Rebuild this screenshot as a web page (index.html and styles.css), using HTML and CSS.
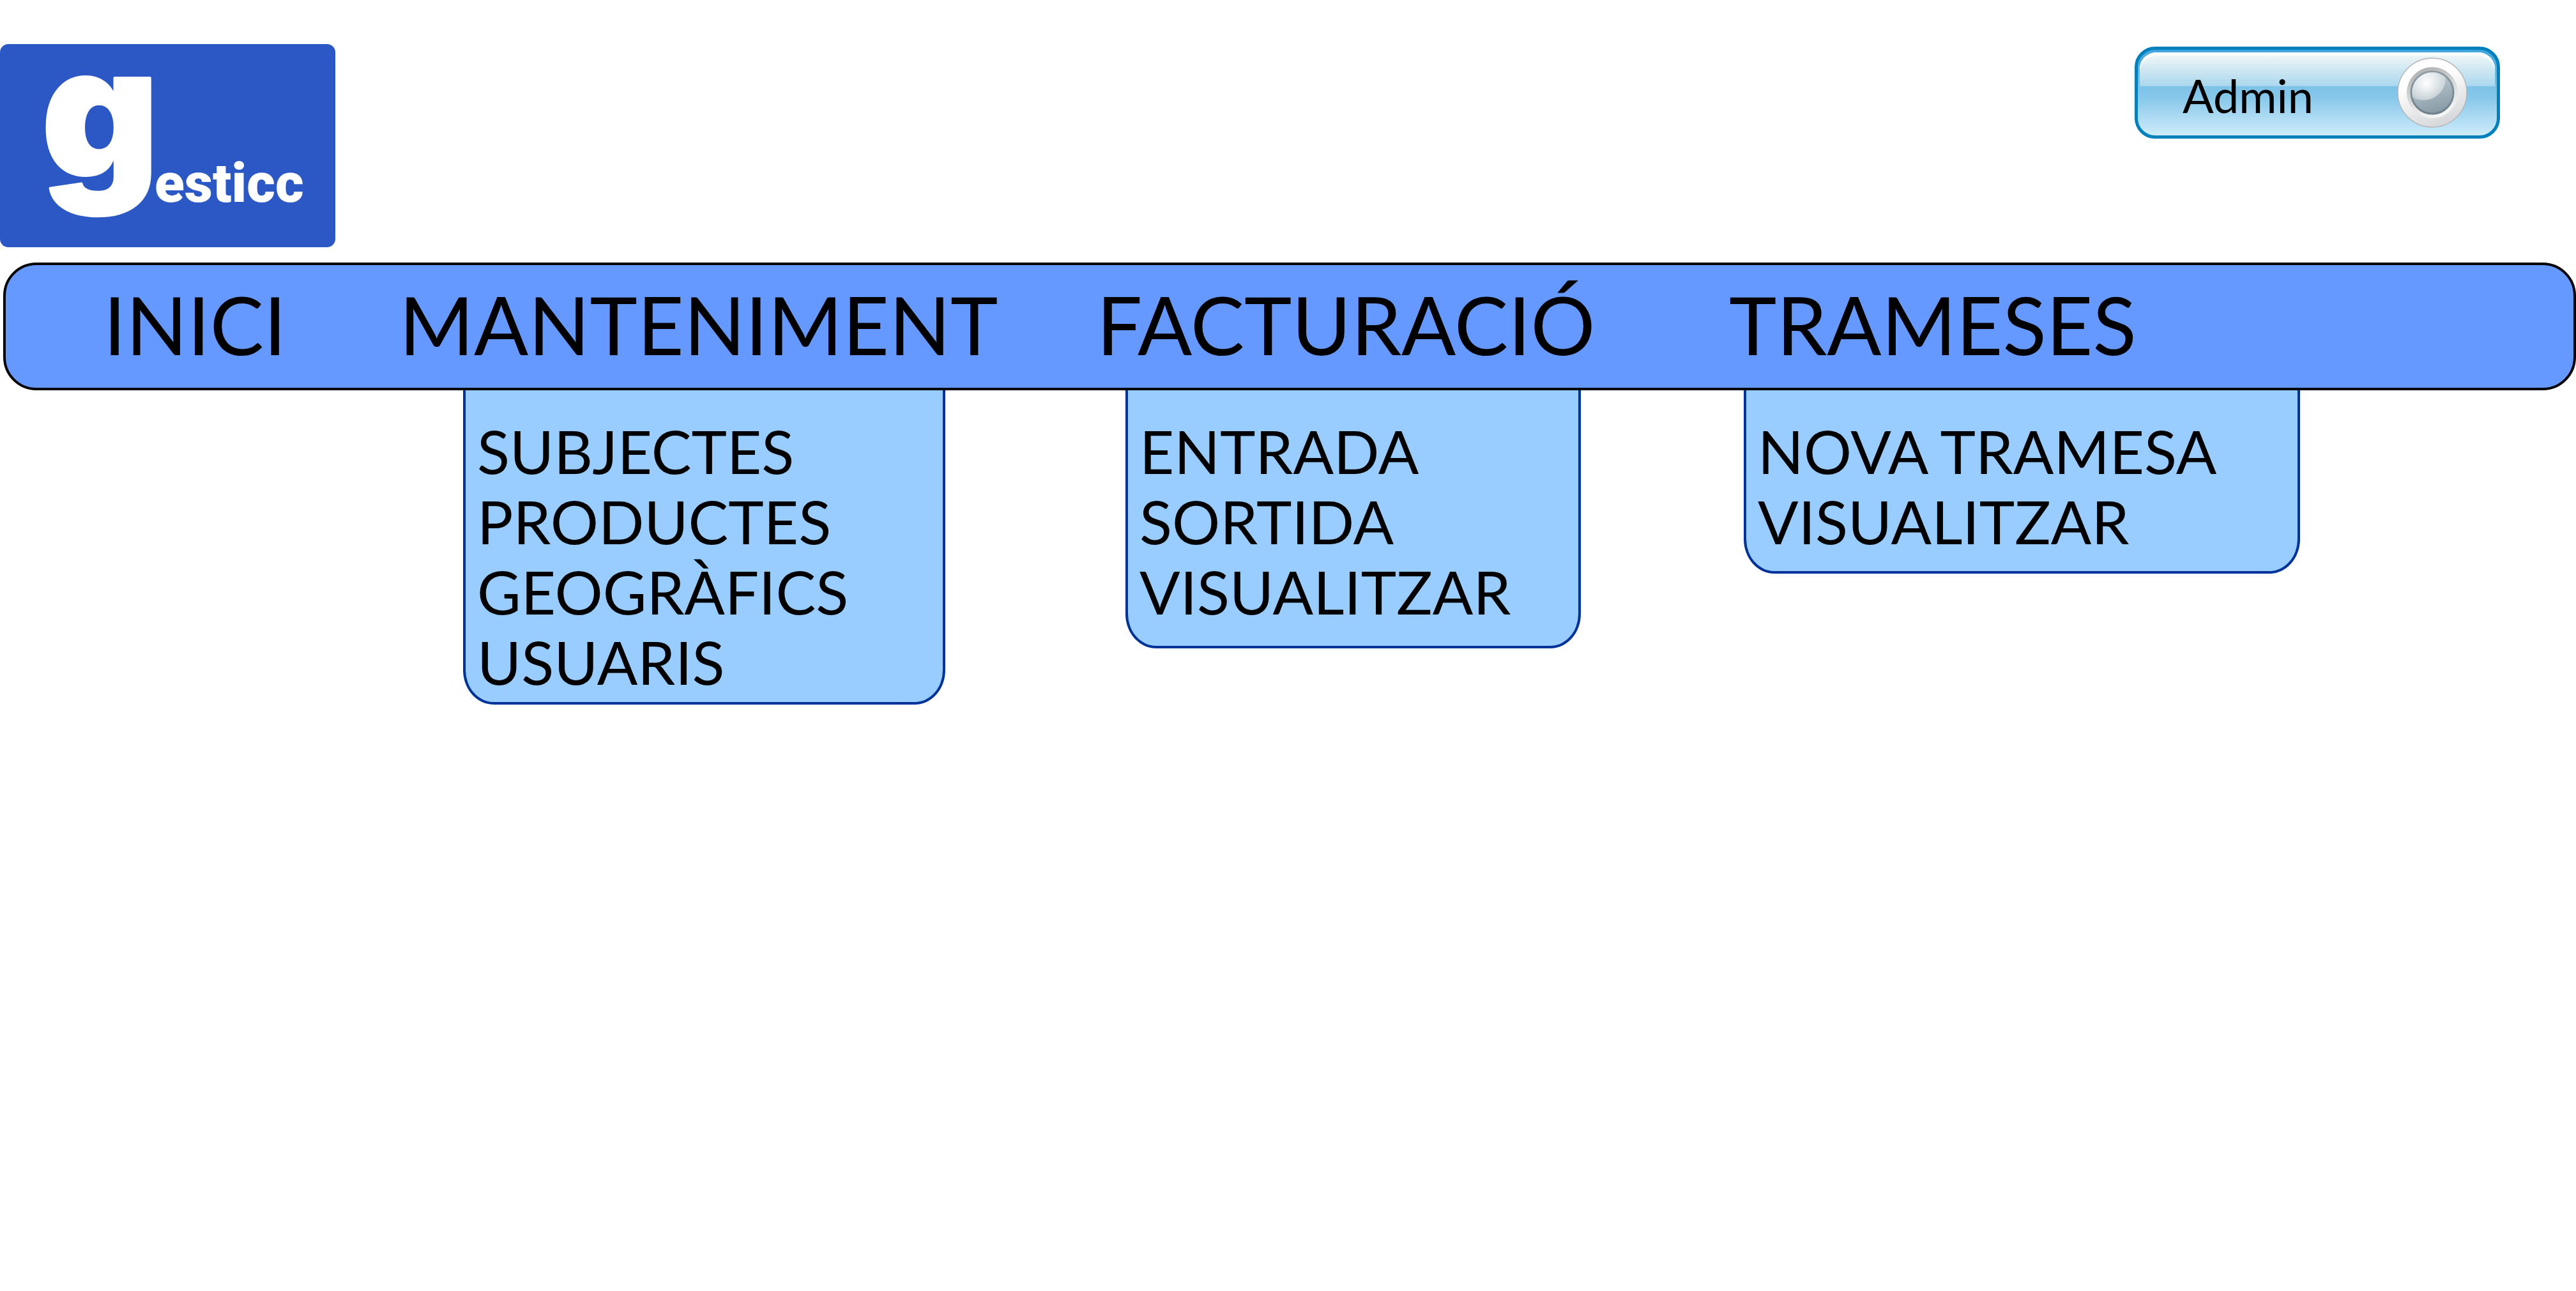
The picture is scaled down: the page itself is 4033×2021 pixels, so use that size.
FILE: index.html
```html
<!DOCTYPE html>
<html lang="ca">
<head>
<meta charset="utf-8">
<meta name="viewport" content="width=device-width, initial-scale=1">
<title>gesticc</title>
<link rel="stylesheet" href="styles.css">
</head>
<body>
<header class="header">
  <a class="logo" href="#">
    <svg class="logo-art" viewBox="0 0 525 318" aria-label="gesticc">
      <text class="logo-initial" x="65" y="208">g</text>
      <text class="logo-rest" x="242" y="247">esticc</text>
    </svg>
  </a>
  <button class="account" type="button">
    <span class="account-name">Admin</span>
    <svg class="knob" viewBox="0 0 110 112" aria-hidden="true">
      <defs>
        <linearGradient id="rim" x1="0.3" y1="0" x2="0.7" y2="1">
          <stop offset="0.3" stop-color="#ffffff"/>
          <stop offset="1" stop-color="#d3d4d6"/>
        </linearGradient>
        <linearGradient id="well" x1="0.3" y1="0" x2="0.7" y2="1">
          <stop offset="0" stop-color="#aeb0b2"/>
          <stop offset="0.5" stop-color="#d9dadb"/>
          <stop offset="1" stop-color="#fafafa"/>
        </linearGradient>
        <linearGradient id="edge" x1="0" y1="0" x2="0" y2="1">
          <stop offset="0" stop-color="#8c9aa3"/>
          <stop offset="1" stop-color="#6f808b"/>
        </linearGradient>
        <linearGradient id="ball" x1="0.3" y1="0" x2="0.6" y2="1">
          <stop offset="0" stop-color="#c3ced4"/>
          <stop offset="0.6" stop-color="#9fb0ba"/>
          <stop offset="1" stop-color="#8799a4"/>
        </linearGradient>
        <radialGradient id="shine" gradientUnits="userSpaceOnUse" cx="46" cy="41" r="34">
          <stop offset="0" stop-color="#ffffff"/>
          <stop offset="1" stop-color="#ffffff" stop-opacity="0.25"/>
        </radialGradient>
        <clipPath id="ball-clip"><circle cx="55" cy="56" r="32"/></clipPath>
      </defs>
      <circle cx="55" cy="56" r="54" fill="url(#rim)" stroke="#b4b5b8" stroke-width="1.5"/>
      <circle cx="55" cy="56" r="40" fill="url(#well)"/>
      <circle cx="55" cy="56" r="33" fill="url(#ball)" stroke="url(#edge)" stroke-width="3"/>
      <circle cx="41" cy="33" r="35" fill="url(#shine)" clip-path="url(#ball-clip)"/>
    </svg>
  </button>
</header>
<nav class="bar" aria-label="Principal">
  <ul class="sections">
    <li class="section"><a href="#">INICI</a></li>
    <li class="section">
      <a href="#">MANTENIMENT</a>
      <ul class="menu menu-manteniment">
        <li><a href="#">SUBJECTES</a></li>
        <li><a href="#">PRODUCTES</a></li>
        <li><a href="#">GEOGRÀFICS</a></li>
        <li><a href="#">USUARIS</a></li>
      </ul>
    </li>
    <li class="section">
      <a href="#">FACTURACIÓ</a>
      <ul class="menu menu-facturacio">
        <li><a href="#">ENTRADA</a></li>
        <li><a href="#">SORTIDA</a></li>
        <li><a href="#">VISUALITZAR</a></li>
      </ul>
    </li>
    <li class="section">
      <a href="#">TRAMESES</a>
      <ul class="menu menu-trameses">
        <li><a href="#">NOVA TRAMESA</a></li>
        <li><a href="#">VISUALITZAR</a></li>
      </ul>
    </li>
  </ul>
</nav>
</body>
</html>
```
FILE: styles.css
```css
* {
  box-sizing: border-box;
}

body {
  min-height: 100vh;
  margin: 0;
  background: #fff;
  color: #000;
  font-family: Lato, "Open Sans", sans-serif;
}

ul {
  margin: 0;
  padding: 0;
  list-style: none;
}

a {
  color: inherit;
  text-decoration: none;
}

.header {
  display: flex;
  justify-content: space-between;
  align-items: flex-start;
  padding: 69px 119px 24px 0;
}

.logo {
  display: block;
  width: 525px;
  border-radius: 13px;
  background: #2b58c4;
}

.logo-art {
  display: block;
  width: 100%;
  overflow: visible;
  fill: #fff;
}

.logo-initial {
  font: 900 284px Inter, sans-serif;
  stroke: #fff;
  stroke-width: 4px;
  stroke-linejoin: round;
}

.logo-rest {
  font: 900 86px Roboto, sans-serif;
}

.account {
  position: relative;
  display: flex;
  justify-content: space-between;
  align-items: center;
  width: 572px;
  height: 144px;
  margin-top: 4px;
  padding: 0 46px 0 70px;
  border: 5px solid #0080bd;
  border-radius: 32px;
  background: linear-gradient(#41a5de, #7fc3e9 45%, #86c7ea 55%, #cfecfa);
  color: #000;
  font: 400 72px Lato, "Open Sans", sans-serif;
}

.account::before {
  content: "";
  position: absolute;
  inset: 4px 3px auto;
  height: 53px;
  border-radius: 26px 26px 0 0;
  background: linear-gradient(#f6f9f7, #a9d7ed);
  box-shadow: inset 0 5px #fff;
}

.account-name {
  position: relative;
  padding-top: 8px;
}

.knob {
  position: relative;
  width: 110px;
  height: 112px;
}

.bar {
  margin-left: 5px;
  border: 4px solid #000;
  border-radius: 52px;
  background: #69f;
}

.sections {
  display: grid;
  grid-template-columns: 463fr 1092fr 990fr 1322fr;
  padding-left: 153px;
}

.section {
  position: relative;
  padding-bottom: 6px;
  font-size: 126px;
  line-height: 186px;
}

.menu {
  position: absolute;
  top: calc(100% + 4px);
  padding: 40px 18px 8px;
  border: 4px solid #039;
  border-top: 0;
  border-radius: 0 0 48px 48px / 0 0 54px 54px;
  background: #9cf;
  font-size: 94px;
  line-height: 110px;
  white-space: nowrap;
}

.menu-manteniment {
  left: 100px;
  width: 755px;
}

.menu-facturacio {
  left: 45px;
  width: 713px;
  padding-bottom: 30px;
}

.menu-trameses {
  left: 23px;
  width: 871px;
  padding-bottom: 23px;
}
```
